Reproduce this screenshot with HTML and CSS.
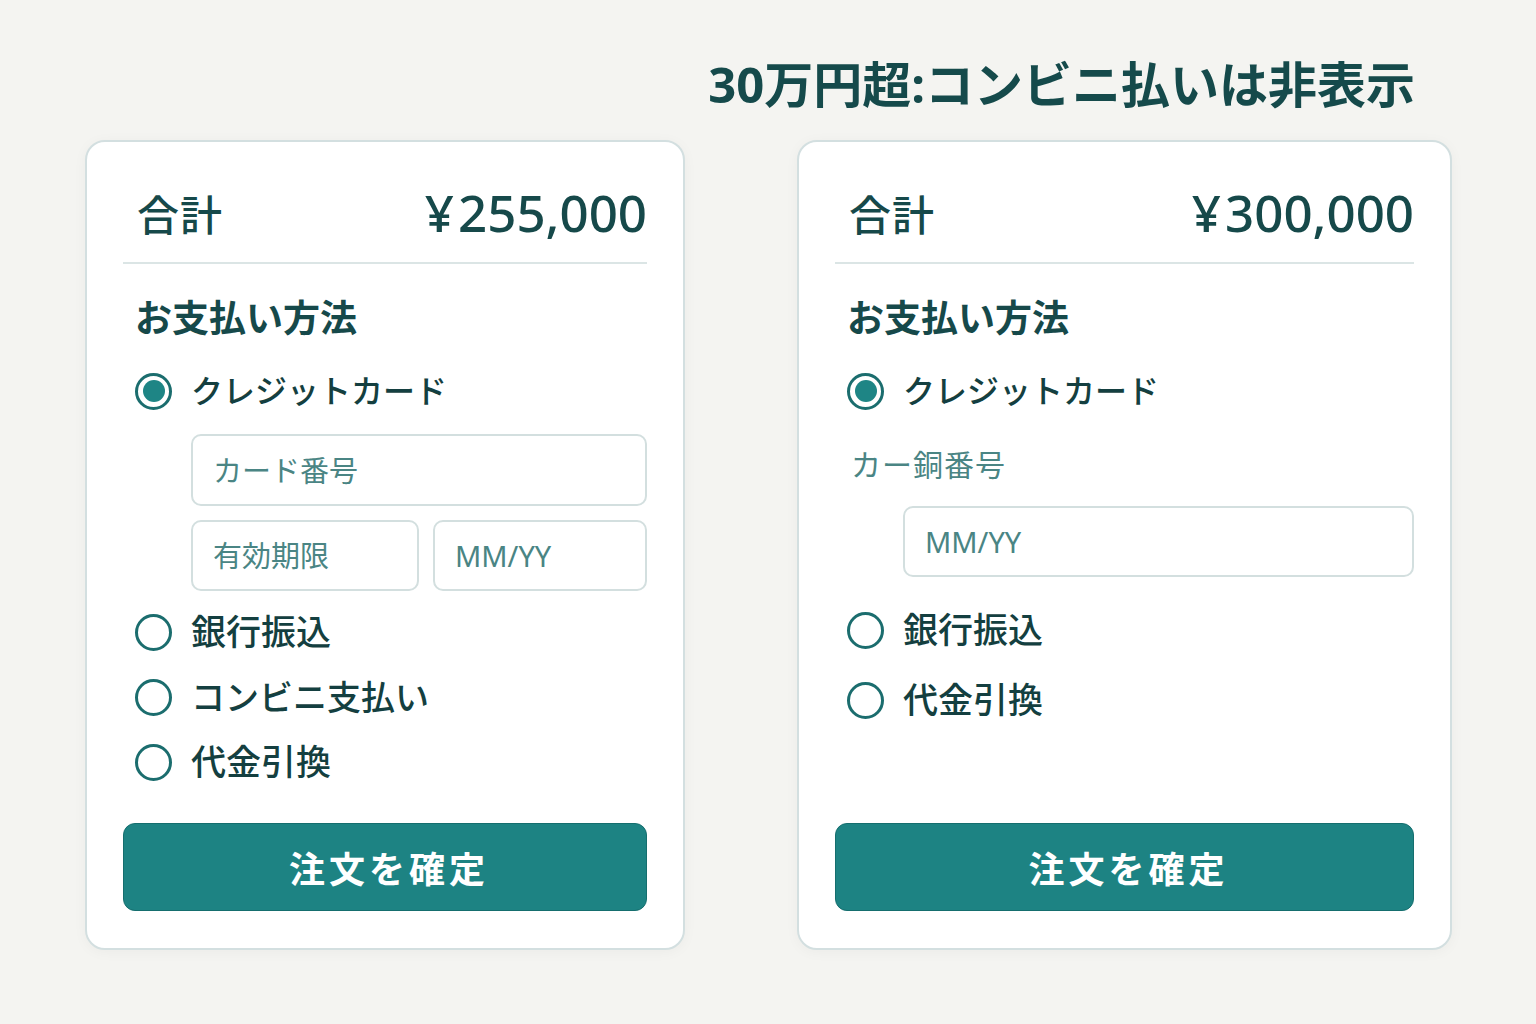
FILE: index.html
```html
<!DOCTYPE html>
<html lang="ja">
<head>
<meta charset="utf-8">
<title>お支払い方法</title>
<link rel="stylesheet" href="styles.css">
</head>
<body>
<div class="page">
  <header class="header">
    <h1 class="title">30万円超:コンビニ払いは非表示</h1>
  </header>
  <div class="cards">
    <section class="card">
      <div class="summary">
        <span class="summary-label">合計</span>
        <span class="summary-amount">¥<span class="amount-num">255,000</span></span>
      </div>
      <div class="payment">
        <h2 class="payment-title">お支払い方法</h2>
        <div class="radio-row radio-row-first">
          <span class="radio radio-checked"></span>
          <span class="radio-label radio-label-kana">クレジットカード</span>
        </div>
        <div class="card-fields">
          <input class="field" type="text" placeholder="カード番号">
          <div class="field-row">
            <input class="field" type="text" placeholder="有効期限">
            <input class="field" type="text" placeholder="MM/YY">
          </div>
        </div>
        <div class="radio-list">
          <div class="radio-row"><span class="radio"></span><span class="radio-label">銀行振込</span></div>
          <div class="radio-row"><span class="radio"></span><span class="radio-label radio-label-mixed">コンビニ支払い</span></div>
          <div class="radio-row"><span class="radio"></span><span class="radio-label">代金引換</span></div>
        </div>
      </div>
      <button class="submit" type="button">注文を確定</button>
    </section>

    <section class="card">
      <div class="summary">
        <span class="summary-label">合計</span>
        <span class="summary-amount">¥<span class="amount-num">300,000</span></span>
      </div>
      <div class="payment">
        <h2 class="payment-title">お支払い方法</h2>
        <div class="radio-row radio-row-first">
          <span class="radio radio-checked"></span>
          <span class="radio-label radio-label-kana">クレジットカード</span>
        </div>
        <div class="field-label">カー銅番号</div>
        <div class="card-fields card-fields-single">
          <input class="field" type="text" placeholder="MM/YY">
        </div>
        <div class="radio-list radio-list-wide">
          <div class="radio-row"><span class="radio"></span><span class="radio-label">銀行振込</span></div>
          <div class="radio-row"><span class="radio"></span><span class="radio-label">代金引換</span></div>
        </div>
      </div>
      <button class="submit" type="button">注文を確定</button>
    </section>
  </div>
</div>
</body>
</html>
```

FILE: styles.css
```css
* { box-sizing: border-box; }

html, body {
  margin: 0;
  padding: 0;
  background: #f4f4f1;
}

body {
  font-family: "Noto Sans", "Noto Sans CJK JP", sans-serif;
  color: #16494a;
  width: 1536px;
  height: 1024px;
  overflow: hidden;
}

.page {
  padding: 0 84px 0 85px;
}

.header {
  height: 140px;
  padding-top: 55px;
  padding-right: 37px;
  display: flex;
  justify-content: flex-end;
}

.title {
  margin: 0;
  font-size: 49px;
  line-height: 58px;
  font-weight: 700;
  color: #154a4b;
  white-space: nowrap;
}

.cards {
  display: grid;
  grid-template-columns: 600px 655px;
  column-gap: 112px;
  height: 810px;
}

.card {
  background: #ffffff;
  border: 2px solid #d3dfe0;
  border-radius: 20px;
  box-shadow: 0 2px 14px rgba(0, 0, 0, 0.04);
  padding: 0 36px 37px 36px;
  display: flex;
  flex-direction: column;
}

.summary {
  height: 122px;
  padding: 20px 0 0 14px;
  display: flex;
  align-items: center;
  justify-content: space-between;
  border-bottom: 2px solid #dbe5e5;
}

.summary-label {
  font-size: 42px;
  font-weight: 500;
  letter-spacing: 1px;
}

.summary-amount {
  font-size: 51px;
  font-weight: 500;
  line-height: 1;
}

.amount-num {
  margin-left: 4px;
}

.payment {
  padding-left: 12px;
  display: flex;
  flex-direction: column;
}

.payment-title {
  margin: 32px 0 0 0;
  height: 44px;
  font-size: 37px;
  line-height: 44px;
  font-weight: 700;
}

.radio-row {
  height: 44px;
  display: flex;
  align-items: center;
  gap: 19px;
}

.radio-row-first {
  margin-top: 29px;
}

.radio {
  width: 37px;
  height: 37px;
  border: 3px solid #1b6d6e;
  border-radius: 50%;
  flex: none;
  display: flex;
  align-items: center;
  justify-content: center;
}

.radio-checked::after {
  content: "";
  width: 22px;
  height: 22px;
  border-radius: 50%;
  background: #1e8585;
}

.radio-label {
  font-size: 35px;
  line-height: 44px;
  font-weight: 500;
  color: #143f40;
}

.radio-label-kana {
  font-size: 32px;
}

.radio-label-mixed {
  font-size: 34px;
}

.card-fields {
  margin: 21px 0 0 56px;
  display: flex;
  flex-direction: column;
  gap: 14px;
}

.field-row {
  display: grid;
  grid-template-columns: 228px 1fr;
  gap: 14px;
}

.field {
  display: block;
  width: 100%;
  height: 72px;
  border: 2px solid #d3dfdf;
  border-radius: 10px;
  padding: 0 20px;
  font-family: "Noto Sans", "Noto Sans CJK JP", sans-serif;
  font-size: 29px;
  color: #4a8584;
  background: #ffffff;
  outline: none;
}

.field-row .field {
  height: 71px;
}

.field::placeholder {
  color: #4a8584;
  opacity: 1;
}

.field-label {
  margin: 32px 0 0 4px;
  height: 40px;
  font-size: 30px;
  line-height: 40px;
  letter-spacing: 1px;
  color: #4a8584;
}

.card-fields-single {
  margin-top: 21px;
}

.card-fields-single .field {
  height: 71px;
}

.radio-list {
  margin-top: 19px;
  display: flex;
  flex-direction: column;
  gap: 21px;
}

.radio-list-wide {
  margin-top: 31px;
  gap: 26px;
}

.submit {
  margin-top: auto;
  height: 88px;
  width: 100%;
  padding: 0 0 0 8px;
  background: #1d8383;
  border: 1px solid #156e6e;
  border-radius: 12px;
  color: #ffffff;
  font-family: "Noto Sans", "Noto Sans CJK JP", sans-serif;
  font-size: 36px;
  font-weight: 700;
  letter-spacing: 4px;
  cursor: pointer;
}
```
